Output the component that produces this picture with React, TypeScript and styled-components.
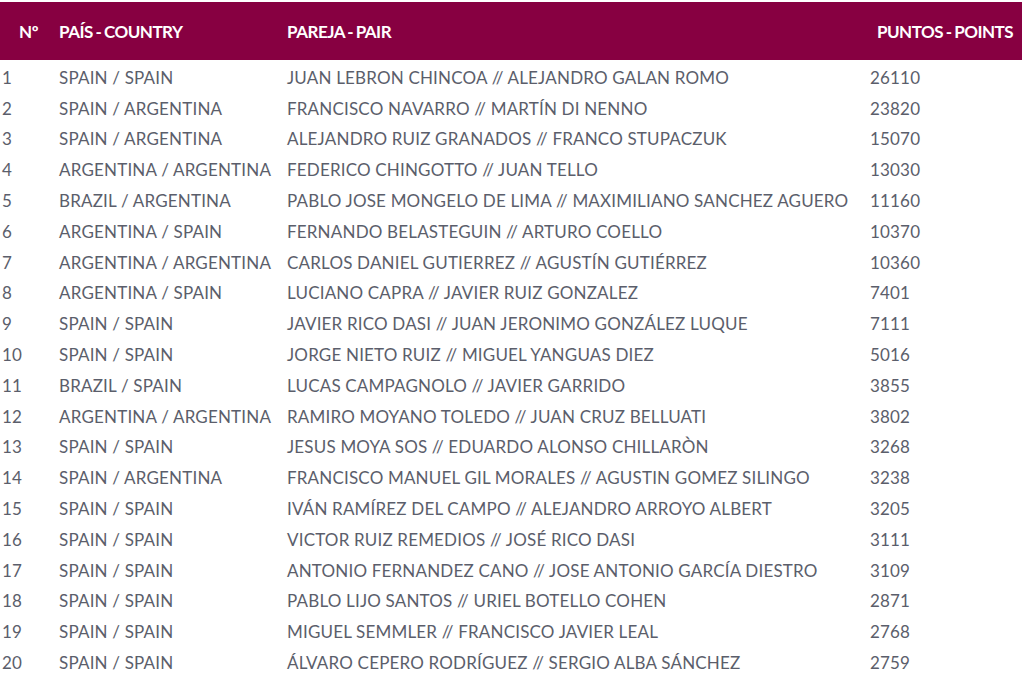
import React from "react";
import styled, { createGlobalStyle } from "styled-components";

const Global = createGlobalStyle`
  html, body { margin: 0; padding: 0; background: #ffffff; }
  body { font-family: Lato, "Open Sans", sans-serif; }
  *, *::before, *::after { box-sizing: border-box; }
`;

const Wrap = styled.div`
  padding-top: 2px;
  width: 1022px;
`;

const Table = styled.table`
  width: 1022px;
  border-collapse: collapse;
  table-layout: fixed;
`;

const HeadRow = styled.tr`
  background: #870041;
  height: 58px;
`;

const Th = styled.th<{ $align?: string }>`
  color: #ffffff;
  font-family: Lato, sans-serif;
  font-weight: 700;
  font-size: 17px;
  letter-spacing: -0.5px;
  word-spacing: -1px;
  text-align: ${(p) => p.$align || "left"};
  padding: 0 2px;
  white-space: nowrap;
`;

const Tr = styled.tr`
  height: 30.8px;
`;

const Td = styled.td`
  color: #5b5e6b;
  font-family: Lato, sans-serif;
  font-weight: 400;
  font-size: 17px;
  letter-spacing: 0.18px;
  padding: 4px 2px 0 2px;
  white-space: nowrap;
  text-align: left;
  vertical-align: middle;
`;

const rows: [string, string, string][] = [
  ["SPAIN / SPAIN", "JUAN LEBRON CHINCOA // ALEJANDRO GALAN ROMO", "26110"],
  ["SPAIN / ARGENTINA", "FRANCISCO NAVARRO // MARTÍN DI NENNO", "23820"],
  ["SPAIN / ARGENTINA", "ALEJANDRO RUIZ GRANADOS // FRANCO STUPACZUK", "15070"],
  ["ARGENTINA / ARGENTINA", "FEDERICO CHINGOTTO // JUAN TELLO", "13030"],
  ["BRAZIL / ARGENTINA", "PABLO JOSE MONGELO DE LIMA // MAXIMILIANO SANCHEZ AGUERO", "11160"],
  ["ARGENTINA / SPAIN", "FERNANDO BELASTEGUIN // ARTURO COELLO", "10370"],
  ["ARGENTINA / ARGENTINA", "CARLOS DANIEL GUTIERREZ // AGUSTÍN GUTIÉRREZ", "10360"],
  ["ARGENTINA / SPAIN", "LUCIANO CAPRA // JAVIER RUIZ GONZALEZ", "7401"],
  ["SPAIN / SPAIN", "JAVIER RICO DASI // JUAN JERONIMO GONZÁLEZ LUQUE", "7111"],
  ["SPAIN / SPAIN", "JORGE NIETO RUIZ // MIGUEL YANGUAS DIEZ", "5016"],
  ["BRAZIL / SPAIN", "LUCAS CAMPAGNOLO // JAVIER GARRIDO", "3855"],
  ["ARGENTINA / ARGENTINA", "RAMIRO MOYANO TOLEDO // JUAN CRUZ BELLUATI", "3802"],
  ["SPAIN / SPAIN", "JESUS MOYA SOS // EDUARDO ALONSO CHILLARÒN", "3268"],
  ["SPAIN / ARGENTINA", "FRANCISCO MANUEL GIL MORALES // AGUSTIN GOMEZ SILINGO", "3238"],
  ["SPAIN / SPAIN", "IVÁN RAMÍREZ DEL CAMPO // ALEJANDRO ARROYO ALBERT", "3205"],
  ["SPAIN / SPAIN", "VICTOR RUIZ REMEDIOS // JOSÉ RICO DASI", "3111"],
  ["SPAIN / SPAIN", "ANTONIO FERNANDEZ CANO // JOSE ANTONIO GARCÍA DIESTRO", "3109"],
  ["SPAIN / SPAIN", "PABLO LIJO SANTOS // URIEL BOTELLO COHEN", "2871"],
  ["SPAIN / SPAIN", "MIGUEL SEMMLER // FRANCISCO JAVIER LEAL", "2768"],
  ["SPAIN / SPAIN", "ÁLVARO CEPERO RODRÍGUEZ // SERGIO ALBA SÁNCHEZ", "2759"],
];

export default function App() {
  return (
    <Wrap>
      <Global />
      <Table>
        <colgroup>
          <col style={{ width: 57 }} />
          <col style={{ width: 228 }} />
          <col style={{ width: 583 }} />
          <col style={{ width: 154 }} />
        </colgroup>
        <thead>
          <HeadRow>
            <Th $align="center">Nº</Th>
            <Th>PAÍS - COUNTRY</Th>
            <Th>PAREJA - PAIR</Th>
            <Th $align="center">PUNTOS - POINTS</Th>
          </HeadRow>
        </thead>
        <tbody>
          {rows.map((r, i) => (
            <Tr key={i}>
              <Td>{i + 1}</Td>
              <Td>{r[0]}</Td>
              <Td>{r[1]}</Td>
              <Td>{r[2]}</Td>
            </Tr>
          ))}
        </tbody>
      </Table>
    </Wrap>
  );
}
